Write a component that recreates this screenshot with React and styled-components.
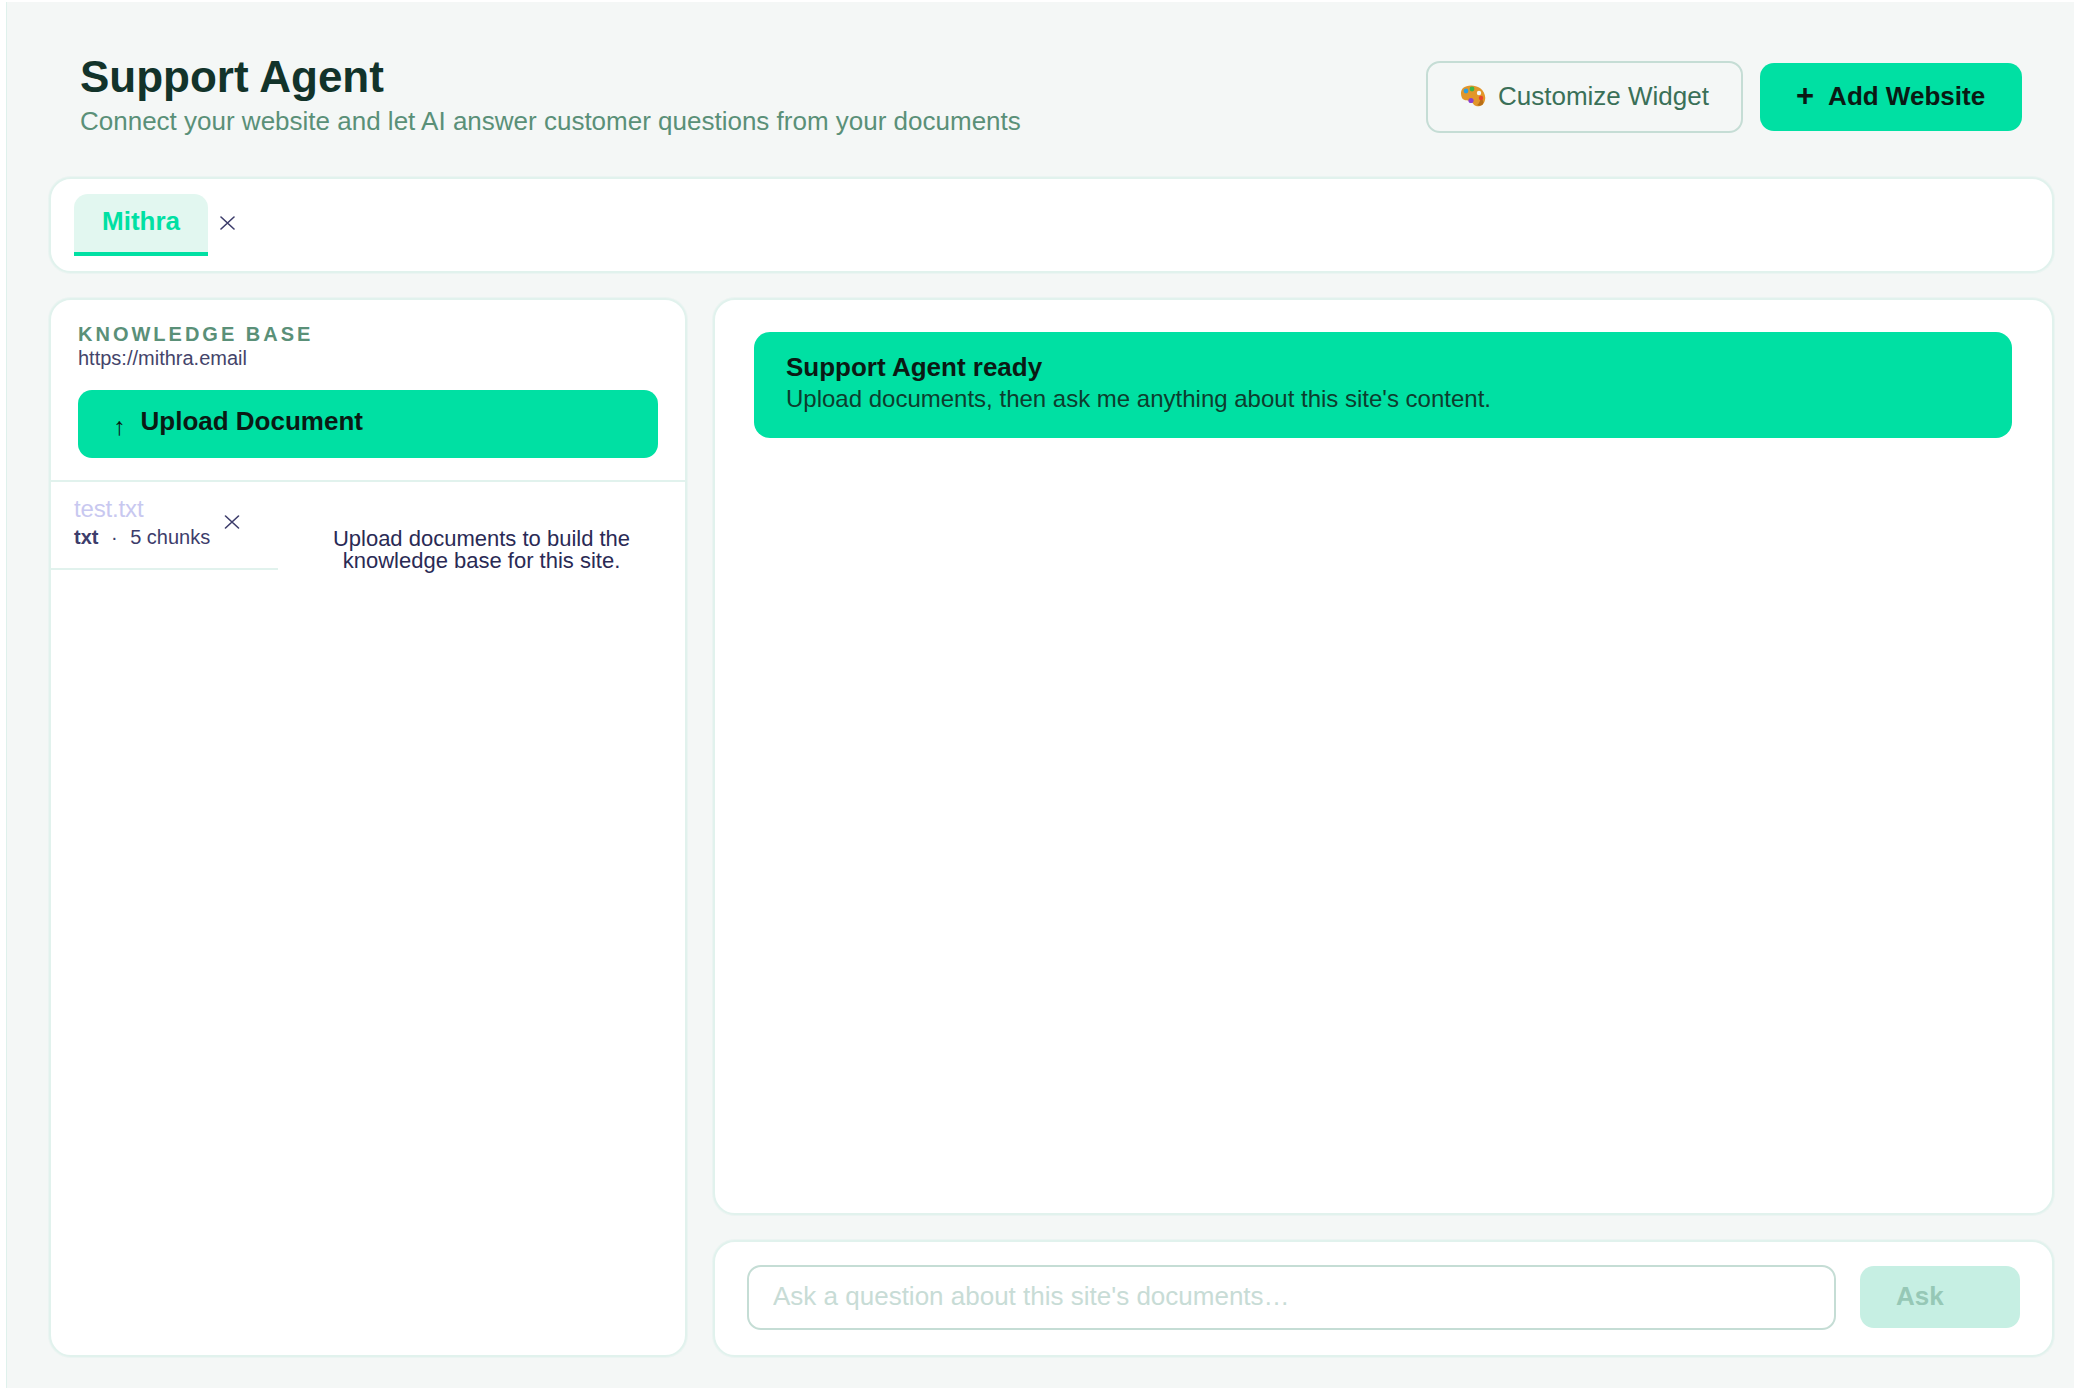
import React from "react";
import styled, { createGlobalStyle } from "styled-components";

const Global = createGlobalStyle`
  html, body { margin: 0; padding: 0; background: #fff; }
  body { font-family: "Liberation Sans", Arial, sans-serif; }
  * { box-sizing: border-box; }
`;

const Page = styled.div`
  margin: 2px 0 0 6px;
  height: 1386px;
  border-left: 1px solid #dff1ec;
  background: #f4f7f6;
  padding: 45px 20px 31px 42px;
  display: flex;
  flex-direction: column;
`;

const Header = styled.header`
  display: flex;
  align-items: center;
  justify-content: space-between;
  height: 100px;
  padding: 0 32px 0 31px;
  margin-bottom: 30px;
`;
const TitleBlock = styled.div`
  display: flex;
  flex-direction: column;
  gap: 2px;
  padding-bottom: 6px;
`;
const Title = styled.h1`
  margin: 0;
  font-size: 44px;
  line-height: 52px;
  font-weight: 700;
  color: #12332a;
`;
const Subtitle = styled.p`
  margin: 0;
  font-size: 26px;
  line-height: 32px;
  color: #5a9078;
`;
const HeaderActions = styled.div`
  display: flex;
  align-items: center;
  gap: 17px;
`;
const GhostButton = styled.button`
  display: flex;
  align-items: center;
  gap: 12px;
  width: 317px;
  height: 72px;
  padding: 0 0 2px 32px;
  border: 2px solid #c5ddd5;
  border-radius: 14px;
  background: transparent;
  font: 400 26px "Liberation Sans", Arial, sans-serif;
  color: #3a7058;
`;
const PrimaryButton = styled.button`
  display: flex;
  align-items: center;
  gap: 14px;
  width: 262px;
  height: 68px;
  padding: 0 0 2px 36px;
  border: 0;
  border-radius: 14px;
  background: #00e0a3;
  font: 700 26px "Liberation Sans", Arial, sans-serif;
  color: #0a1a14;
`;
const Plus = styled.span`
  font-size: 31px;
  line-height: 30px;
`;

const Card = styled.section`
  background: #fff;
  border: 2px solid #e1f2ed;
  border-radius: 22px;
  box-shadow: 0 0 0 1px rgba(225, 242, 237, 0.5);
`;
const TabBar = styled(Card)`
  height: 96px;
  flex: none;
  display: flex;
  align-items: flex-start;
  gap: 12px;
  padding: 15px 23px;
  margin-bottom: 25px;
`;
const Tab = styled.div`
  width: 134px;
  height: 62px;
  padding-top: 12px;
  text-align: center;
  background: #e2f7f0;
  border-radius: 14px 14px 0 0;
  border-bottom: 4px solid #00e0a3;
  font-size: 26px;
  line-height: 30px;
  font-weight: 700;
  color: #00e0a3;
`;
const TabClose = styled.span`
  display: flex;
  margin-top: 22px;
  color: #3d3d6b;
`;

const Columns = styled.div`
  flex: 1;
  min-height: 0;
  display: grid;
  grid-template-columns: 638px 1fr;
  gap: 26px;
`;
const SidePanel = styled(Card)`
  display: flex;
  flex-direction: column;
`;
const SideHead = styled.div`
  padding: 23px 27px 22px;
  border-bottom: 2px solid #e1f2ed;
`;
const Label = styled.div`
  font-size: 20px;
  line-height: 22px;
  font-weight: 700;
  letter-spacing: 0.15em;
  color: #5a9078;
`;
const Url = styled.div`
  margin-top: 1px;
  font-size: 20px;
  line-height: 24px;
  color: #44446a;
`;
const UploadButton = styled.button`
  display: flex;
  align-items: center;
  gap: 15px;
  width: 100%;
  height: 68px;
  margin-top: 20px;
  padding: 0 0 6px 35px;
  border: 0;
  border-radius: 14px;
  background: #00e0a3;
  font: 700 26px "Liberation Sans", Arial, sans-serif;
  color: #0a1a14;
`;
const UpArrow = styled.span`
  margin-top: 10px;
  font-size: 25px;
  font-weight: 400;
`;
const SideBody = styled.div`
  display: flex;
  align-items: flex-start;
`;
const FileRow = styled.div`
  width: 227px;
  height: 88px;
  flex: none;
  display: flex;
  justify-content: space-between;
  padding: 13px 38px 0 23px;
  border-bottom: 2px solid #e1f2ed;
`;
const FileName = styled.div`
  font-size: 24px;
  line-height: 28px;
  letter-spacing: -0.15px;
  color: #c8c8f0;
`;
const FileMeta = styled.div`
  display: flex;
  gap: 12.5px;
  margin-top: 2px;
  font-size: 20px;
  line-height: 24px;
  color: #3d3d6b;
  white-space: nowrap;
`;
const FileType = styled.b`
  font-weight: 700;
`;
const FileClose = styled.span`
  display: flex;
  margin-top: 20px;
  color: #3d3d6b;
`;
const EmptyNote = styled.p`
  flex: 1;
  margin: 46px 0 0;
  text-align: center;
  font-size: 22px;
  line-height: 22px;
  color: #2a2a55;
`;

const ChatColumn = styled.div`
  display: flex;
  flex-direction: column;
  gap: 25px;
  min-height: 0;
`;
const Messages = styled(Card)`
  flex: 1;
  padding: 32px 40px 32px 39px;
`;
const Banner = styled.div`
  height: 106px;
  padding: 19px 32px;
  border-radius: 16px;
  background: #00e0a3;
`;
const BannerTitle = styled.div`
  font-size: 26px;
  line-height: 32px;
  font-weight: 700;
  color: #0a1a14;
`;
const BannerText = styled.div`
  font-size: 24px;
  line-height: 32px;
  color: #0d3d2e;
`;
const Composer = styled(Card)`
  height: 117px;
  flex: none;
  display: flex;
  align-items: center;
  gap: 24px;
  padding: 0 32px 3px 32px;
`;
const Question = styled.input`
  flex: 1;
  height: 65px;
  padding: 0 24px 1px;
  border: 2px solid #c5ddd5;
  border-radius: 14px;
  outline: none;
  background: #fff;
  font: 400 26px "Liberation Sans", Arial, sans-serif;
  color: #12332a;
  &::placeholder { color: #c8dcd6; opacity: 1; }
`;
const AskButton = styled.button`
  width: 160px;
  height: 62px;
  padding: 0 0 2px 36px;
  text-align: left;
  border: 0;
  border-radius: 14px;
  background: #c6efe3;
  font: 700 26px "Liberation Sans", Arial, sans-serif;
  color: #96c8b6;
`;

const Cross = ({ w = 15, h = 14 }) => (
  <svg width={w} height={h} viewBox="0 0 15 14" fill="none" stroke="currentColor" strokeWidth="1.6" strokeLinecap="round">
    <path d="M1 1 14 13M14 1 1 13" />
  </svg>
);

const Palette = () => (
  <svg width="26" height="22" viewBox="0 0 26 22">
    <path d="M3 3C7-.5 15-.5 20 3c4 3 6 8 5 12-1 5-5 7-9 6-3-.7-3-4-6-5-3-1-6 0-8-3C.5 10 .5 5.5 3 3Z" fill="#e2962a" />
    <path d="M21 13c2 2 3 4 2 6-1 2-4 2-6 1 2-1 3-4 4-7Z" fill="#b86f17" />
    <circle cx="6" cy="6" r="2.4" fill="#2f9ee0" />
    <circle cx="12" cy="4" r="2.4" fill="#3bb54a" />
    <circle cx="19" cy="8" r="2.2" fill="#f4f7f6" />
    <circle cx="21" cy="13" r="2.2" fill="#e8452f" />
    <circle cx="11" cy="15.5" r="2.6" fill="#8a3fd0" />
  </svg>
);

export default function App() {
  return (
    <>
      <Global />
      <Page>
        <Header>
          <TitleBlock>
            <Title>Support Agent</Title>
            <Subtitle>Connect your website and let AI answer customer questions from your documents</Subtitle>
          </TitleBlock>
          <HeaderActions>
            <GhostButton><Palette />Customize Widget</GhostButton>
            <PrimaryButton><Plus>+</Plus>Add Website</PrimaryButton>
          </HeaderActions>
        </Header>
        <TabBar>
          <Tab>Mithra</Tab>
          <TabClose><Cross /></TabClose>
        </TabBar>
        <Columns>
          <SidePanel>
            <SideHead>
              <Label>KNOWLEDGE BASE</Label>
              <Url>https://mithra.email</Url>
              <UploadButton><UpArrow>↑</UpArrow>Upload Document</UploadButton>
            </SideHead>
            <SideBody>
              <FileRow>
                <div>
                  <FileName>test.txt</FileName>
                  <FileMeta><FileType>txt</FileType><span>·</span><span>5 chunks</span></FileMeta>
                </div>
                <FileClose><Cross w={16} /></FileClose>
              </FileRow>
              <EmptyNote>Upload documents to build the<br />knowledge base for this site.</EmptyNote>
            </SideBody>
          </SidePanel>
          <ChatColumn>
            <Messages>
              <Banner>
                <BannerTitle>Support Agent ready</BannerTitle>
                <BannerText>Upload documents, then ask me anything about this site's content.</BannerText>
              </Banner>
            </Messages>
            <Composer>
              <Question placeholder="Ask a question about this site's documents…" />
              <AskButton disabled>Ask</AskButton>
            </Composer>
          </ChatColumn>
        </Columns>
      </Page>
    </>
  );
}
